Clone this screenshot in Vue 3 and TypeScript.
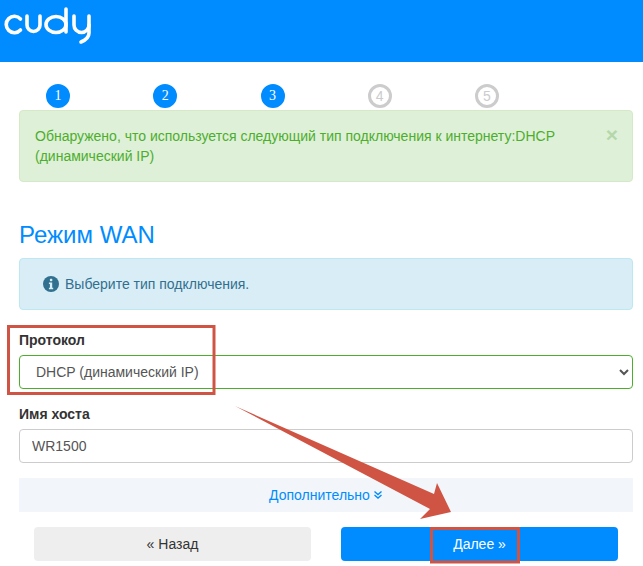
<script setup lang="ts">
interface Step {
  num: number
  done: boolean
}

const steps: Step[] = [
  { num: 1, done: true },
  { num: 2, done: true },
  { num: 3, done: true },
  { num: 4, done: false },
  { num: 5, done: false },
]
</script>

<template>
  <div class="page">
    <header class="topbar">
      <svg class="logo" width="96" height="46" viewBox="0 0 96 46" fill="none" stroke="#fff" stroke-width="3.6">
        <path d="M20.5 19a8.2 8.2 0 1 0 0 11" stroke-linecap="round" />
        <path d="M27 16v9a6.5 6.5 0 0 0 13 0v-9" stroke-linecap="round" />
        <ellipse cx="56" cy="24.5" rx="10" ry="8" />
        <path d="M66 9v23" stroke-linecap="round" />
        <path d="M74 16v9a7 7 0 0 0 15 0" stroke-linecap="round" />
        <path d="M89 16v17c0 4-3 7-8 9" stroke-linecap="round" />
      </svg>
    </header>

    <main class="content">
      <div class="steps">
        <span v-for="s in steps" :key="s.num" class="step" :class="{ done: s.done }">{{ s.num }}</span>
      </div>

      <div class="alert alert-success">
        <span>Обнаружено, что используется следующий тип подключения к интернету:DHCP (динамический IP)</span>
        <span class="close">×</span>
      </div>

      <h3 class="title">Режим WAN</h3>

      <div class="alert alert-info">
        <svg class="info-icon" width="16" height="16" viewBox="0 0 16 16">
          <circle cx="8" cy="8" r="8" fill="#31708f" />
          <rect x="6.9" y="2.8" width="2.4" height="2.4" rx="0.6" fill="#d9edf7" />
          <path d="M5.9 6.6h3.3v5.2h1v1.5H5.9v-1.5h1V8.1h-1z" fill="#d9edf7" />
        </svg>
        <span>Выберите тип подключения.</span>
      </div>

      <div class="field">
        <label>Протокол</label>
        <select class="control select-ok">
          <option>DHCP (динамический IP)</option>
        </select>
      </div>

      <div class="field">
        <label>Имя хоста</label>
        <input class="control" type="text" value="WR1500" />
      </div>

      <div class="advanced">
        <a>Дополнительно</a>
        <svg width="10" height="10" viewBox="0 0 10 10" fill="none" stroke="#008cff" stroke-width="1.4">
          <path d="M1.5 1.5 5 4.5l3.5-3M1.5 5 5 8l3.5-3" />
        </svg>
      </div>

      <div class="actions">
        <button class="btn btn-back">« Назад</button>
        <button class="btn btn-next">Далее »</button>
      </div>
    </main>

    <!-- screenshot annotations drawn on top of the form -->
    <svg class="marks" width="643" height="566" viewBox="0 0 643 566">
      <rect x="8.5" y="326.5" width="205.5" height="67" fill="none" stroke="#d05444" stroke-width="3" />
      <rect x="431.5" y="528.5" width="87" height="33.5" fill="none" stroke="#d05444" stroke-width="3" />
      <path d="M235 406 434 494 437 483 451 512 420 519 430 509Z" fill="#d05444" />
    </svg>
  </div>
</template>

<style>
html, body { margin: 0; background: #fff; }
</style>

<style scoped>
.page { position: relative; width: 643px; height: 566px; overflow: hidden; font-family: "Liberation Sans", Arial, sans-serif; font-size: 14px; color: #333; }
.topbar { height: 62px; background: #008cff; }
.logo { display: block; }
.content { padding: 22px 10px 0 19px; }
.steps { display: flex; height: 24px; padding-left: 27px; gap: 83.25px; margin-bottom: 2px; }
.step { width: 24px; height: 24px; box-sizing: border-box; border-radius: 50%; border: 3px solid #ccc; color: #ccc; background: #fff; display: flex; align-items: center; justify-content: center; font-size: 14px; }
.step.done { background: #008cff; border-color: #008cff; color: #fff; font-family: "Liberation Serif", serif; }
.alert { box-sizing: border-box; border: 1px solid; border-radius: 4px; padding: 15px; line-height: 20px; }
.alert-success { position: relative; height: 72px; background: #dff0d8; border-color: #d6e9c6; color: #4cae2c; padding-right: 60px; }
.close { position: absolute; right: 14px; top: 12px; font-size: 21px; font-weight: bold; line-height: 24px; color: #b5d8aa; }
.title { margin: 38px 0 9px; font-size: 24px; font-weight: 400; line-height: 29px; color: #008cff; }
.alert-info { height: 52px; display: flex; align-items: center; gap: 6px; background: #d9edf7; border-color: #bce8f1; color: #31708f; padding: 0 23px; margin-bottom: 20px; }
.info-icon { flex: none; }
.field { margin-bottom: 15px; }
.field label { display: block; font-weight: bold; line-height: 20px; margin-bottom: 5px; }
.control { display: block; box-sizing: border-box; width: 100%; height: 34px; padding: 6px 12px; border: 1px solid #ccc; border-radius: 4px; background: #fff; color: #555; font-family: inherit; font-size: 14px; outline: none; }
.select-ok { border-color: #4cae2c; }
.advanced { height: 34px; display: flex; align-items: center; justify-content: center; gap: 3px; background: #f2f6fa; color: #008cff; }
.actions { display: flex; gap: 30px; padding: 15px 15px 0; }
.btn { flex: 1; height: 34px; border: 0; border-radius: 4px; font-family: inherit; font-size: 14px; }
.btn-back { background: #eee; color: #333; }
.btn-next { background: #008cff; color: #fff; }
.marks { position: absolute; left: 0; top: 0; pointer-events: none; }
</style>
